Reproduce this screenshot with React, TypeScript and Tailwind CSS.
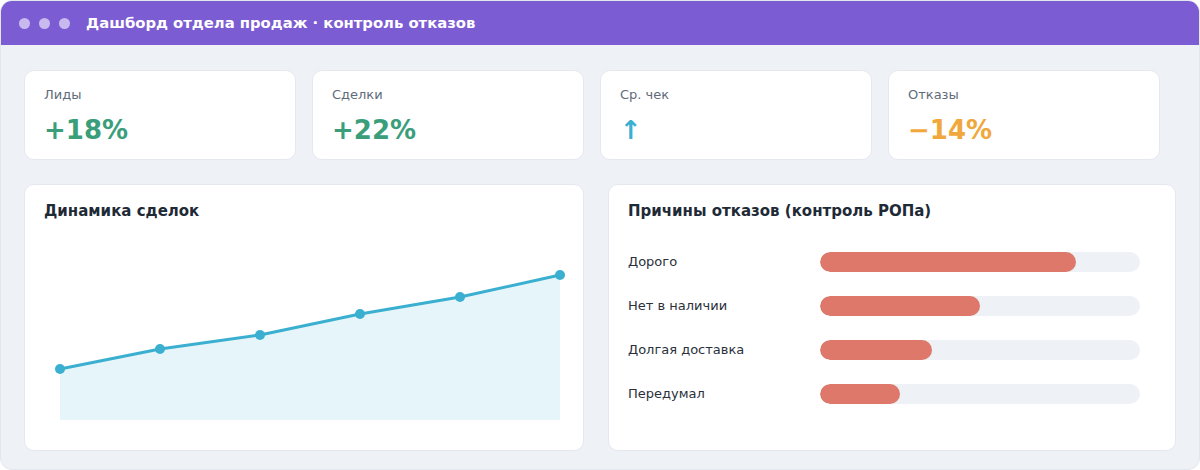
import React from "react";

const cards = [
  { label: "Лиды", value: "+18%", color: "text-[#3a9e7a]" },
  { label: "Сделки", value: "+22%", color: "text-[#3a9e7a]" },
  { label: "Ср. чек", value: "↑", color: "text-[#3aafd0]" },
  { label: "Отказы", value: "−14%", color: "text-[#f0a73c]" },
];

const reasons = [
  { label: "Дорого", pct: 80 },
  { label: "Нет в наличии", pct: 50 },
  { label: "Долгая доставка", pct: 35 },
  { label: "Передумал", pct: 25 },
];

const pts: [number, number][] = [
  [16, 139],
  [116, 119],
  [216, 105],
  [316, 84],
  [416, 67],
  [516, 45],
];

export default function App() {
  const line = pts.map((p) => p.join(",")).join(" ");
  const area = `16,190 ${line} 516,190`;
  return (
    <div
      className="w-[1200px] h-[470px] flex flex-col bg-[#eef1f6] rounded-xl border border-[#e2e7ee] overflow-hidden"
      style={{ fontFamily: '"DejaVu Sans", "Noto Sans", sans-serif' }}
    >
      <div className="h-[44px] shrink-0 bg-[#7c5cd2] flex items-center pl-[18px]">
        <div className="flex gap-[9px]">
          <span className="w-[11px] h-[11px] rounded-full bg-[#c8b9ef]" />
          <span className="w-[11px] h-[11px] rounded-full bg-[#c8b9ef]" />
          <span className="w-[11px] h-[11px] rounded-full bg-[#c8b9ef]" />
        </div>
        <div className="ml-[16px] text-white font-bold text-[14.8px]">
          Дашборд отдела продаж · контроль отказов
        </div>
      </div>
      <div className="flex flex-col px-[23px] pt-[25px] gap-[24px]">
        <div className="flex gap-[16px]">
          {cards.map((c) => (
            <div
              key={c.label}
              className="w-[272px] h-[90px] bg-white rounded-[10px] border border-[#e4e8ee] px-[19px] pt-[16px]"
            >
              <div className="text-[13px] text-[#5f6b7a] leading-[16px]">{c.label}</div>
              <div className={`mt-[12px] text-[26px] font-bold leading-[30px] ${c.color}`}>{c.value}</div>
            </div>
          ))}
        </div>
        <div className="flex gap-[24px]">
          <div className="w-[561px] h-[267px] bg-white rounded-[10px] border border-[#e4e8ee] px-[19px] pt-[16px]">
            <div className="text-[15px] font-bold text-[#1f2a37] leading-[20px]">Динамика сделок</div>
            <svg width="520" height="200" className="mt-[9px] block overflow-visible">
              <polygon points={area} fill="#e6f5fa" />
              <polyline points={line} fill="none" stroke="#3aafd0" strokeWidth="3" strokeLinejoin="round" />
              {pts.map(([x, y]) => (
                <circle key={x} cx={x} cy={y} r="5" fill="#3aafd0" />
              ))}
            </svg>
          </div>
          <div className="w-[569px] h-[267px] bg-white rounded-[10px] border border-[#e4e8ee] px-[19px] pt-[16px]">
            <div className="text-[15px] font-bold text-[#1f2a37] leading-[20px]">
              Причины отказов (контроль РОПа)
            </div>
            <div className="mt-[31px] flex flex-col gap-[24px]">
              {reasons.map((r) => (
                <div key={r.label} className="flex items-center h-[20px]">
                  <div className="w-[192px] text-[13px] text-[#2a313b]">{r.label}</div>
                  <div className="w-[320px] h-[20px] rounded-full bg-[#eef1f6] overflow-hidden">
                    <div className="h-full rounded-full bg-[#dd786a]" style={{ width: `${r.pct}%` }} />
                  </div>
                </div>
              ))}
            </div>
          </div>
        </div>
      </div>
    </div>
  );
}
